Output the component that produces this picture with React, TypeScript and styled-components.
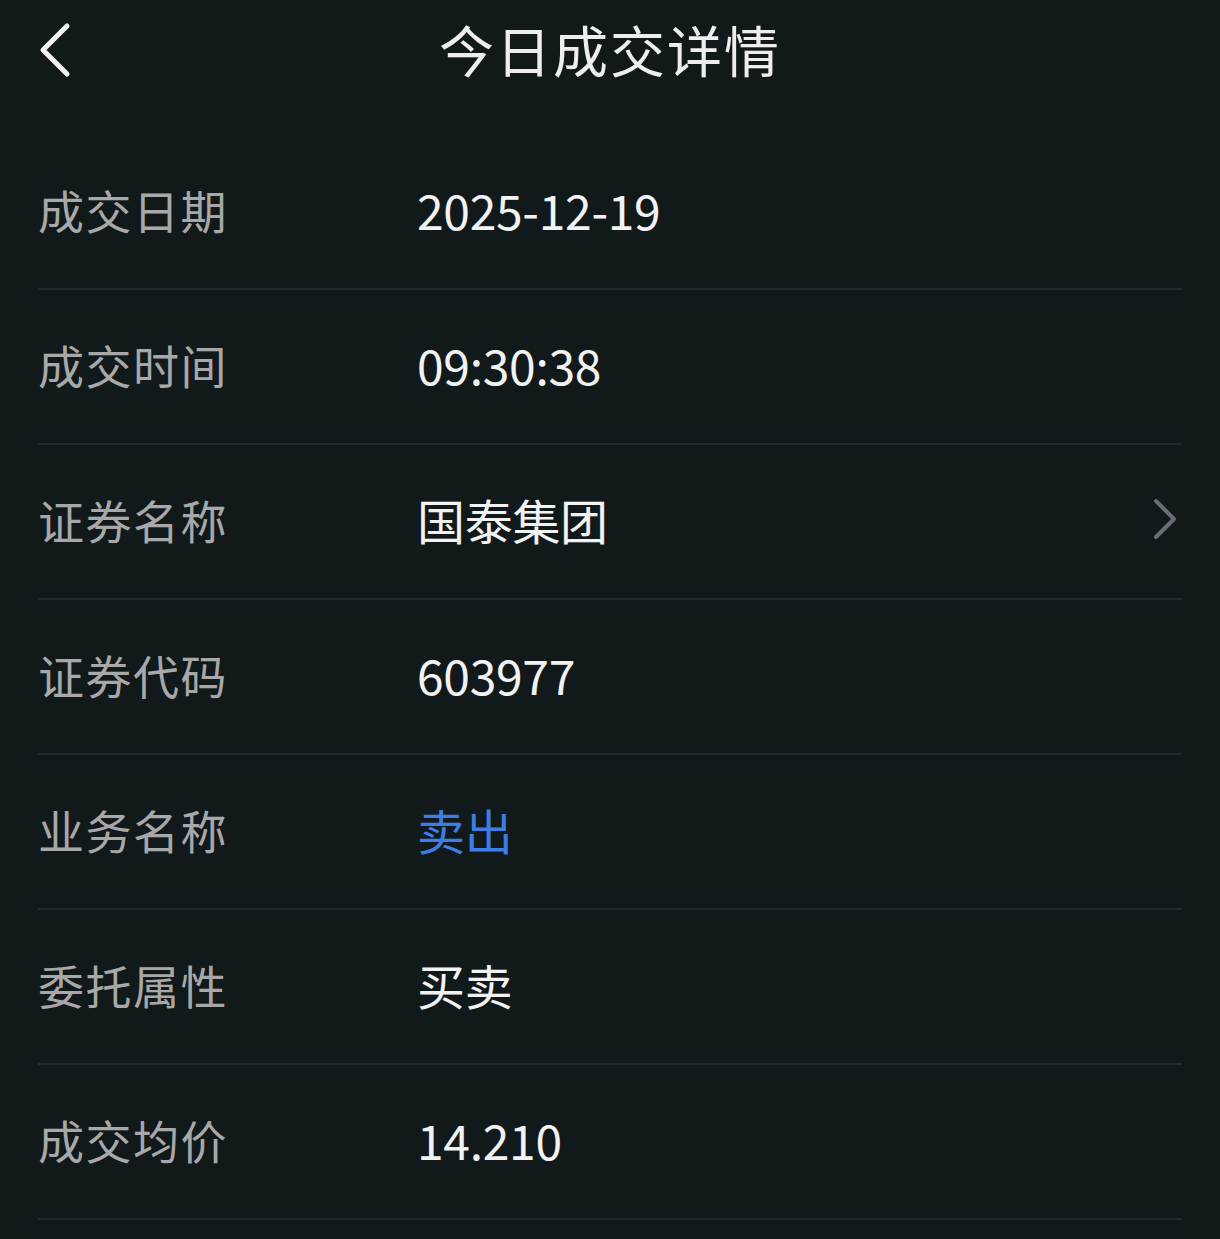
import React from "react";
import styled, { createGlobalStyle } from "styled-components";

const Global = createGlobalStyle`
  html, body { margin: 0; padding: 0; background: #12191a; }
  body { font-family: "Noto Sans CJK SC", "Noto Sans", sans-serif; }
`;

const Page = styled.div`
  width: 1220px;
  min-height: 1239px;
  background: #12191a;
  overflow: hidden;
`;

const Header = styled.header`
  height: 96px;
  display: flex;
  align-items: center;
  justify-content: center;
  position: relative;
`;

const BackButton = styled.button`
  position: absolute;
  left: 33px;
  top: 18px;
  width: 44px;
  height: 64px;
  padding: 0;
  border: none;
  background: transparent;
  display: flex;
  align-items: center;
  justify-content: center;
`;

const Title = styled.h1`
  margin: 0;
  font-size: 55px;
  font-weight: 400;
  color: #eeeeee;
  letter-spacing: 2px;
  line-height: 1;
`;

const List = styled.div`
  margin: 39px 38px 0;
`;

const Row = styled.div`
  height: 155px;
  box-sizing: border-box;
  padding-bottom: 6px;
  border-bottom: 2px solid #25282d;
  display: flex;
  align-items: center;
`;

const Label = styled.div`
  width: 379px;
  font-size: 46px;
  color: #a8a8a8;
  letter-spacing: 1.5px;
`;

const Value = styled.div<{ $accent?: boolean }>`
  flex: 1;
  font-size: 48px;
  color: ${(p) => (p.$accent ? "#3d7ee6" : "#f2f2f2")};
  letter-spacing: -0.3px;
`;

const Arrow = styled.div`
  width: 30px;
  display: flex;
  align-items: center;
  justify-content: flex-end;
  margin-right: 4px;
`;

const rows: { label: string; value: string; accent?: boolean; link?: boolean }[] = [
  { label: "成交日期", value: "2025-12-19" },
  { label: "成交时间", value: "09:30:38" },
  { label: "证券名称", value: "国泰集团", link: true },
  { label: "证券代码", value: "603977" },
  { label: "业务名称", value: "卖出", accent: true },
  { label: "委托属性", value: "买卖" },
  { label: "成交均价", value: "14.210" },
];

export default function App() {
  return (
    <Page>
      <Global />
      <Header>
        <BackButton aria-label="返回">
          <svg width="36" height="60" viewBox="0 0 36 60">
            <path d="M30 6 L6 30 L30 54" fill="none" stroke="#f2f2f2" strokeWidth="5" strokeLinecap="round" strokeLinejoin="round" />
          </svg>
        </BackButton>
        <Title>今日成交详情</Title>
      </Header>
      <List>
        {rows.map((r) => (
          <Row key={r.label}>
            <Label>{r.label}</Label>
            <Value $accent={r.accent}>{r.value}</Value>
            {r.link && (
              <Arrow>
                <svg width="26" height="44" viewBox="0 0 26 44">
                  <path d="M4 4 L22 22 L4 40" fill="none" stroke="#6a6d77" strokeWidth="4" strokeLinecap="round" strokeLinejoin="round" />
                </svg>
              </Arrow>
            )}
          </Row>
        ))}
      </List>
    </Page>
  );
}
